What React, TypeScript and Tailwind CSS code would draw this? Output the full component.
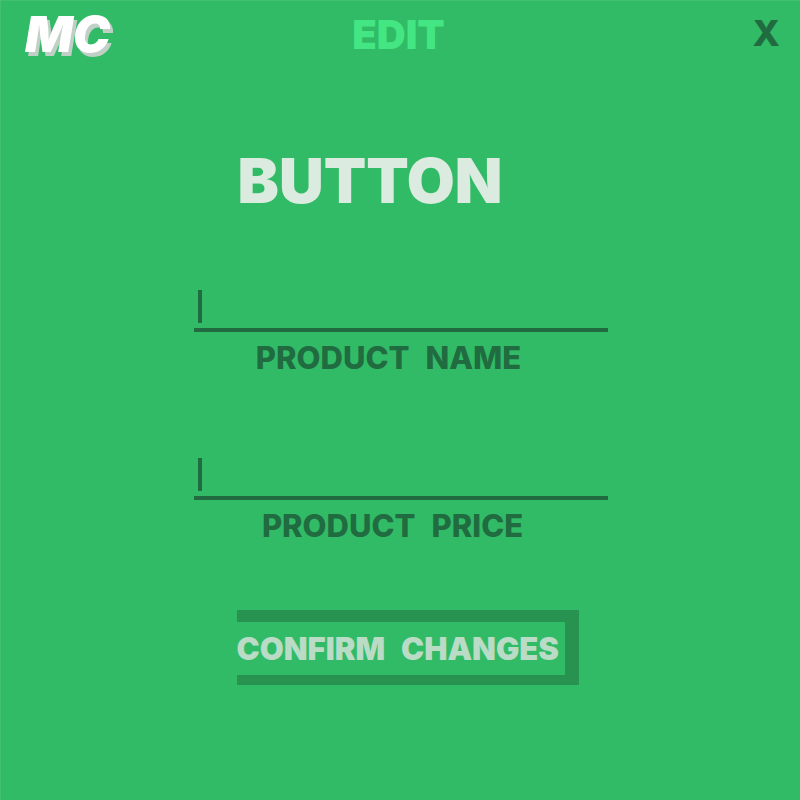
type FieldProps = { id: string; words: string[]; labelClass: string };

function Field({ id, words, labelClass }: FieldProps) {
  return (
    <div className="flex w-full flex-col">
      <div className="flex h-[42px] border-b-4 border-[#216b40] pl-1">
        <span className="h-[33px] w-1 shrink-0 bg-[#216b40]" aria-hidden="true" />
        <input
          id={id}
          type="text"
          className="h-[33px] min-w-0 flex-1 bg-transparent pl-2 text-2xl font-bold text-[#216b40] caret-[#216b40] outline-none"
        />
      </div>
      <label
        htmlFor={id}
        className={`mt-[10px] flex justify-center gap-4 text-[31px] leading-8 font-extrabold text-[#216b40] ${labelClass}`}
      >
        {words.map((word) => (
          <span key={word}>{word}</span>
        ))}
      </label>
    </div>
  );
}

export default function App() {
  return (
    <div className="min-h-screen w-full border-t border-l border-[#42c073] bg-[#32bb66] font-['Inter',sans-serif]">
      <header className="grid h-[76px] grid-cols-3 items-start px-5">
        <a
          href="#home"
          className="justify-self-start pl-1 pt-[5px] text-[50px] leading-[56px] font-black text-white italic [text-shadow:3px_4px_0_#c0d0c7]"
        >
          MC
        </a>
        <h2 className="justify-self-center pt-[10px] pr-1 text-[40px] leading-[48px] font-black text-[#43e682]">
          EDIT
        </h2>
        <button
          type="button"
          aria-label="Close"
          className="justify-self-end pt-[12px] text-[36px] leading-10 font-extrabold text-[#216b40]"
        >
          X
        </button>
      </header>
      <main className="mx-auto flex w-full max-w-[414px] flex-col">
        <h1 className="mt-[72px] pl-[44px] text-[62px] leading-[64px] font-black text-[#dbebdf]">
          BUTTON
        </h1>
        <form className="mt-[77px] flex flex-col" onSubmit={(e) => e.preventDefault()}>
          <Field id="product-name" words={["PRODUCT", "NAME"]} labelClass="pr-6" />
          <div className="mt-[84px]">
            <Field id="product-price" words={["PRODUCT", "PRICE"]} labelClass="pr-4" />
          </div>
          <button
            type="submit"
            className="mt-[68px] ml-[43px] flex h-[75px] w-[342px] items-center gap-4 border-t-12 border-r-14 border-b-10 border-[#289250] text-[31px] leading-8 font-black text-[#badbc6]"
          >
            <span>CONFIRM</span>
            <span>CHANGES</span>
          </button>
        </form>
      </main>
    </div>
  );
}
